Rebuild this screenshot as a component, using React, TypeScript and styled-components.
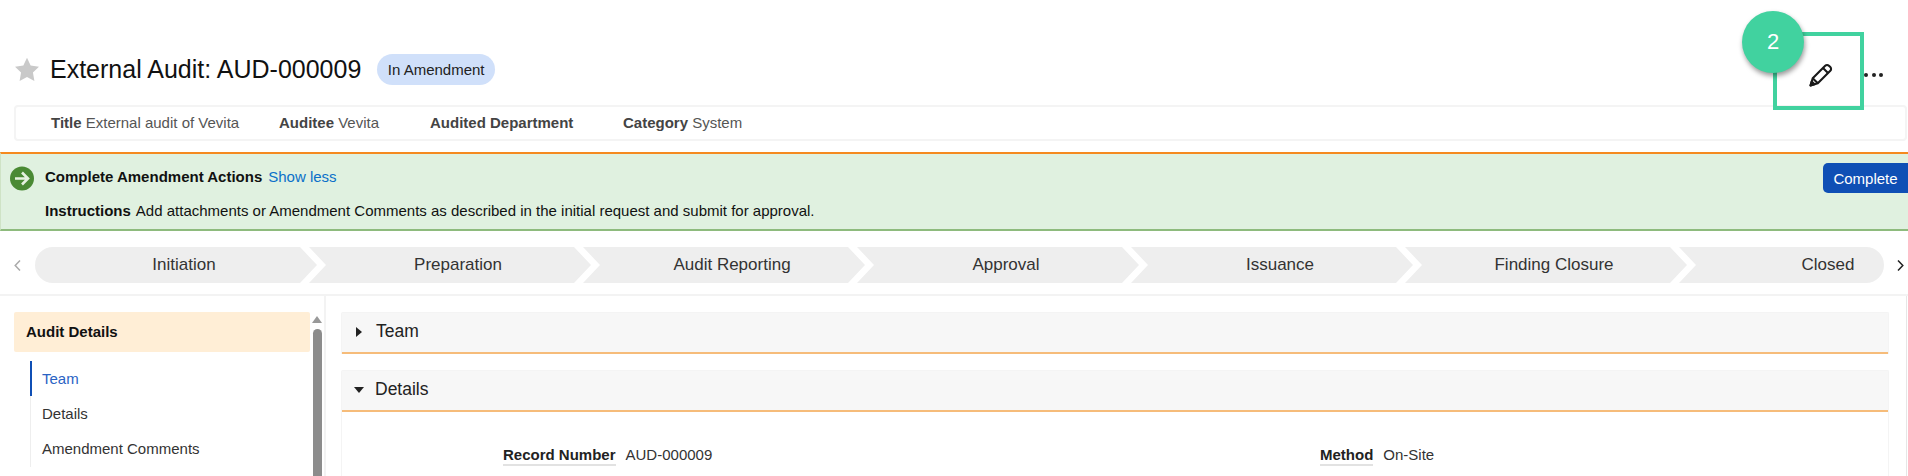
import React from "react";
import styled, { createGlobalStyle } from "styled-components";

const GlobalStyle = createGlobalStyle`
  html, body {
    margin: 0;
    padding: 0;
    background: #fff;
    font-family: "Liberation Sans", Arial, sans-serif;
    color: #1a1a1a;
  }
  * {
    box-sizing: border-box;
  }
`;

const Page = styled.div`
  position: relative;
  width: 1908px;
  height: 476px;
  overflow: hidden;
  background: #fff;
`;

const Header = styled.header`
  display: flex;
  align-items: center;
  height: 31px;
  margin-top: 54px;
  padding-left: 14px;
`;

const StarIcon = styled.svg`
  width: 26px;
  height: 25px;
  fill: #c9c9c9;
`;

const Title = styled.h1`
  margin: 0 0 0 10px;
  font-size: 25px;
  font-weight: 400;
  color: #111;
`;

const Badge = styled.span`
  display: flex;
  align-items: center;
  height: 31px;
  margin-left: 16px;
  padding: 0 10.5px;
  border-radius: 16px;
  background: #d0e0fa;
  font-size: 15px;
  color: #222;
`;

const HeaderActions = styled.div`
  display: flex;
  align-items: center;
  margin: 10px 0 0 auto;
  padding-right: 25px;
  gap: 31px;
`;

const PencilIcon = styled.svg`
  width: 24px;
  height: 24px;
  fill: none;
  stroke: #1a1a1a;
  stroke-width: 2.1;
  stroke-linejoin: round;
`;

const MoreDots = styled.div`
  display: flex;
  gap: 3.5px;
`;

const Dot = styled.span`
  width: 4px;
  height: 4px;
  border-radius: 50%;
  background: #222;
`;

const SummaryBar = styled.div`
  display: flex;
  align-items: center;
  height: 36px;
  margin: 20px 1px 0 14px;
  padding: 0 0 2px 35px;
  border: 2px solid #f4f4f4;
  border-radius: 4px;
  font-size: 15px;
  color: #555;
`;

const SummaryItem = styled.span<{ $width: number }>`
  width: ${(p) => p.$width}px;
  white-space: nowrap;

  b {
    color: #444;
  }
`;

const ActionBanner = styled.section`
  display: flex;
  height: 79px;
  margin-top: 11px;
  border-top: 2px solid #f58a1f;
  border-bottom: 2px solid #8ebb7d;
  border-left: 1px solid #cfe3c6;
  background: #e0f1e0;
  font-size: 15px;
  color: #111;
`;

const ArrowIcon = styled.svg`
  flex: none;
  width: 24px;
  height: 25px;
  margin: 12px 0 0 9px;
`;

const BannerText = styled.div`
  display: flex;
  flex-direction: column;
  gap: 17px;
  margin: 14px 0 0 11px;
  line-height: 17px;
`;

const BannerRow = styled.div`
  white-space: nowrap;
`;

const BannerLink = styled.a`
  margin-left: 6px;
  color: #0a70c9;
`;

const BannerLabel = styled.b`
  margin-right: 5px;
`;

const CompleteButton = styled.button`
  align-self: flex-start;
  width: 85px;
  height: 30px;
  margin: 9px 0 0 auto;
  border: none;
  border-radius: 5px 0 0 5px;
  background: #0f4fb5;
  color: #fff;
  font: 15px "Liberation Sans", Arial, sans-serif;
`;

const StepperRow = styled.nav`
  display: flex;
  align-items: center;
  height: 65px;
  padding-top: 5px;
  border-bottom: 2px solid #f3f3f3;
`;

const StepArrow = styled.svg<{ $dark?: boolean }>`
  flex: none;
  width: 7px;
  height: 11px;
  margin: ${(p) => (p.$dark ? "0 0 0 13px" : "0 14px 0 14px")};
  fill: none;
  stroke: ${(p) => (p.$dark ? "#222" : "#aaa")};
  stroke-width: 1.5;
`;

const Steps = styled.ol`
  display: flex;
  flex: none;
  width: 1849px;
  height: 36px;
  margin: 0;
  padding: 0;
  overflow: hidden;
  border-radius: 18px;
  list-style: none;
`;

const Step = styled.li`
  display: flex;
  flex: 0 0 282px;
  align-items: center;
  justify-content: center;
  padding-left: 16px;
  margin-left: -8px;
  background: #eee;
  color: #333;
  font-size: 17px;
  clip-path: polygon(0 0, calc(100% - 17px) 0, 100% 50%, calc(100% - 17px) 100%, 0 100%, 17px 50%);

  &:first-child {
    margin-left: 0;
    clip-path: polygon(0 0, calc(100% - 17px) 0, 100% 50%, calc(100% - 17px) 100%, 0 100%);
  }
`;

const Content = styled.div`
  display: flex;
  flex: 1;
  min-height: 0;
`;

const Sidebar = styled.aside`
  display: flex;
  flex: none;
  width: 326px;
  height: 180px;
  padding: 16px 2px 0 14px;
  border-right: 2px solid #f3f3f3;
`;

const SidebarMain = styled.div`
  flex: 1;
`;

const SidebarTitle = styled.div`
  display: flex;
  align-items: center;
  height: 40px;
  padding: 0 0 2px 12px;
  border-radius: 2px;
  background: #ffeed6;
  font-size: 15px;
  font-weight: 700;
  color: #111;
`;

const SideNav = styled.ul`
  margin: 9px 0 0 16px;
  padding: 0 0 1px;
  border-left: 1px solid #eee;
  list-style: none;
`;

const SideNavItem = styled.li<{ $active?: boolean }>`
  display: flex;
  align-items: center;
  height: 35px;
  margin-left: -1px;
  padding-left: 10px;
  border-left: 2px solid ${(p) => (p.$active ? "#0f4fb5" : "transparent")};
  font-size: 15px;
  color: ${(p) => (p.$active ? "#2a63c4" : "#333")};
`;

const ScrollTrack = styled.div`
  display: flex;
  flex: none;
  flex-direction: column;
  align-items: center;
  width: 10px;
  margin-left: 2px;
`;

const ScrollUp = styled.div`
  margin-top: 4px;
  border: 5px solid transparent;
  border-top: none;
  border-bottom: 7px solid #999;
`;

const ScrollThumb = styled.div`
  flex: 1;
  width: 9px;
  margin-top: 6px;
  border-radius: 5px 5px 0 0;
  background: #8c8c8c;
`;

const Main = styled.main`
  flex: none;
  width: 1548px;
  margin-left: 15px;
  padding-top: 16px;
`;

const Panel = styled.section`
  margin-bottom: 16px;
  border: 1px solid #f4f4f4;
  border-bottom: none;
  border-radius: 2px 2px 0 0;
`;

const PanelHeader = styled.div`
  display: flex;
  align-items: center;
  height: 41px;
  padding: 0 0 2px 13px;
  border-bottom: 2px solid #f6bc7a;
  background: #f7f7f7;
  font-size: 17.5px;
  color: #222;
`;

const Caret = styled.span<{ $open?: boolean }>`
  width: 0;
  height: 0;
  border-style: solid;
  ${(p) =>
    p.$open
      ? "margin: 0 11px 0 -1px; border-width: 6px 5.5px 0 5.5px; border-color: #222 transparent transparent;"
      : "margin: 0 14px 0 1px; border-width: 5px 0 5px 6px; border-color: transparent transparent transparent #222;"}
`;

const PanelBody = styled.div`
  display: grid;
  grid-template-columns: 817px 1fr;
  height: 80px;
  padding: 34px 0 0 161px;
`;

const Field = styled.div`
  display: flex;
  align-items: flex-start;
  font-size: 15px;
  color: #333;
`;

const FieldLabel = styled.span`
  margin-right: 10px;
  border-bottom: 2px solid #e2e2e2;
  padding-bottom: 1px;
  font-weight: 700;
  color: #222;
`;

const RightScrollLine = styled.div`
  flex: none;
  width: 1px;
  margin-left: 17px;
  background: #e6e6e6;
`;

const CalloutBox = styled.div`
  position: absolute;
  top: 32px;
  left: 1773px;
  width: 91px;
  height: 78px;
  border: 4px solid #41d29f;
`;

const CalloutBadge = styled.div`
  position: absolute;
  top: 11px;
  left: 1742px;
  display: flex;
  align-items: center;
  justify-content: center;
  width: 62px;
  height: 62px;
  border-radius: 50%;
  background: #41d29f;
  box-shadow: 1px 3px 5px rgba(0, 0, 0, 0.4);
  color: #fff;
  font-size: 22px;
`;

const stages = [
  "Initiation",
  "Preparation",
  "Audit Reporting",
  "Approval",
  "Issuance",
  "Finding Closure",
  "Closed",
];

const App = () => {
  return (
    <Page>
      <GlobalStyle />
      <Header>
        <StarIcon viewBox="0 0 24 24">
          <path d="M12 .8l3.5 7.4 8 1.1-5.8 5.6 1.4 8.1L12 19.2l-7.1 3.8 1.4-8.1L.5 9.3l8-1.1z" />
        </StarIcon>
        <Title>External Audit: AUD-000009</Title>
        <Badge>In Amendment</Badge>
        <HeaderActions>
          <PencilIcon viewBox="0 0 24 24">
            <path d="M1.5 22.5l2.2-7.3L16.2 2.7a2.6 2.6 0 0 1 3.7 0l1.4 1.4a2.6 2.6 0 0 1 0 3.7L8.8 20.3z" />
            <path d="M14 5l5 5M3.7 15.2l5.1 5.1" />
            <path d="M1.5 22.5l1.2-4 2.8 2.8z" fill="#1a1a1a" />
          </PencilIcon>
          <MoreDots>
            <Dot />
            <Dot />
            <Dot />
          </MoreDots>
        </HeaderActions>
      </Header>

      <SummaryBar>
        <SummaryItem $width={228}>
          <b>Title</b> External audit of Vevita
        </SummaryItem>
        <SummaryItem $width={151}>
          <b>Auditee</b> Vevita
        </SummaryItem>
        <SummaryItem $width={193}>
          <b>Audited Department</b>
        </SummaryItem>
        <SummaryItem $width={150}>
          <b>Category</b> System
        </SummaryItem>
      </SummaryBar>

      <ActionBanner>
        <ArrowIcon viewBox="0 0 24 24">
          <circle cx="12" cy="12" r="12" fill="#4a8a34" />
          <path d="M5 12h13M12 6l6 6-6 6" fill="none" stroke="#e6f2e0" strokeWidth="2.6" />
        </ArrowIcon>
        <BannerText>
          <BannerRow>
            <b>Complete Amendment Actions</b>
            <BannerLink>Show less</BannerLink>
          </BannerRow>
          <BannerRow>
            <BannerLabel>Instructions</BannerLabel>
            Add attachments or Amendment Comments as described in the initial request and submit for approval.
          </BannerRow>
        </BannerText>
        <CompleteButton>Complete</CompleteButton>
      </ActionBanner>

      <StepperRow>
        <StepArrow viewBox="0 0 7 11">
          <path d="M6 .5L1.2 5.5 6 10.5" />
        </StepArrow>
        <Steps>
          {stages.map((stage) => (
            <Step key={stage}>{stage}</Step>
          ))}
        </Steps>
        <StepArrow $dark viewBox="0 0 7 11">
          <path d="M1 .5l4.8 5L1 10.5" />
        </StepArrow>
      </StepperRow>

      <Content>
        <Sidebar>
          <SidebarMain>
            <SidebarTitle>Audit Details</SidebarTitle>
            <SideNav>
              <SideNavItem $active>Team</SideNavItem>
              <SideNavItem>Details</SideNavItem>
              <SideNavItem>Amendment Comments</SideNavItem>
            </SideNav>
          </SidebarMain>
          <ScrollTrack>
            <ScrollUp />
            <ScrollThumb />
          </ScrollTrack>
        </Sidebar>
        <Main>
          <Panel>
            <PanelHeader>
              <Caret />
              Team
            </PanelHeader>
          </Panel>
          <Panel>
            <PanelHeader>
              <Caret $open />
              Details
            </PanelHeader>
            <PanelBody>
              <Field>
                <FieldLabel>Record Number</FieldLabel>
                AUD-000009
              </Field>
              <Field>
                <FieldLabel>Method</FieldLabel>
                On-Site
              </Field>
            </PanelBody>
          </Panel>
        </Main>
        <RightScrollLine />
      </Content>

      <CalloutBox />
      <CalloutBadge>2</CalloutBadge>
    </Page>
  );
};

export default App;
